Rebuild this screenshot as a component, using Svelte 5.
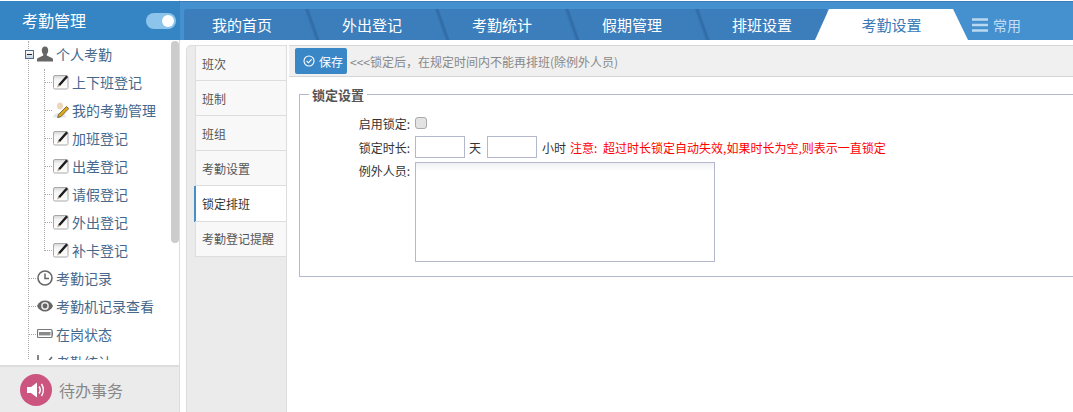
<script>
  const tabs = ['外出登记', '考勤统计', '假期管理', '排班设置'];
  const sideTabs = [
    ['班次', false], ['班制', false], ['班组', false],
    ['考勤设置', false], ['锁定排班', true], ['考勤登记提醒', false]
  ];
  const leaves = [
    ['上下班登记', 'edit'], ['我的考勤管理', 'user'], ['加班登记', 'edit'], ['出差登记', 'edit'],
    ['请假登记', 'edit'], ['外出登记', 'edit'], ['补卡登记', 'edit']
  ];
</script>

{#snippet editIcon()}
  <svg class="ico" width="16" height="16" viewBox="0 0 16 16">
    <defs>
      <linearGradient id="paper" x1="0" y1="0" x2="0" y2="1">
        <stop offset="0" stop-color="#d4d4d4"/>
        <stop offset="0.3" stop-color="#f4f4f4"/>
        <stop offset="1" stop-color="#fff"/>
      </linearGradient>
    </defs>
    <rect x="0.5" y="1.5" width="14.5" height="13.5" rx="1.5" fill="url(#paper)" stroke="#a8a8a8"/>
    <path d="M5.2 10.6 L13.2 1.6 L15 3 L7 12 Z" fill="#1c1c1c"/>
    <path d="M5.2 10.6 L7 12 L4 13.4 Z" fill="#b29a78"/>
  </svg>
{/snippet}

{#snippet userIcon()}
  <svg class="ico" width="16" height="16" viewBox="0 0 16 16">
    <ellipse cx="7" cy="4" rx="3" ry="3.6" fill="#ecd6bc"/>
    <path d="M0 15.5 C0 9.5 13 9 13 15.5 Z" fill="#e4e8ec"/>
    <path d="M5.5 12.5 L13.5 4.5 L15.8 6.6 L8 14.6 L4.6 15.6 Z" fill="#dba820" stroke="#4d4018" stroke-width="0.7"/>
  </svg>
{/snippet}

<div class="app">
  <aside class="side">
    <header class="brand">
      <span>考勤管理</span>
      <span class="toggle"><i></i></span>
    </header>

    <div class="tree">
      <div class="vline outer"></div>
      <div class="vline inner"></div>
      <div class="scroll"></div>

      <div class="row top first">
        <span class="minus"></span>
        <svg class="ico" width="16" height="16" viewBox="0 0 16 16">
          <path d="M8 0.5 C5.6 0.5 4.8 2.4 4.8 4.4 C4.8 6 5.5 7.4 6.2 8.2 L6.2 9.6 L1 12 C0.3 12.4 0 13 0 14 L0 15.5 L16 15.5 L16 14 C16 13 15.7 12.4 15 12 L9.8 9.6 L9.8 8.2 C10.5 7.4 11.2 6 11.2 4.4 C11.2 2.4 10.4 0.5 8 0.5 Z" fill="#666"/>
        </svg>
        <span>个人考勤</span>
      </div>

      {#each leaves as [label, icon]}
        <div class="row leaf">
          {#if icon === 'edit'}{@render editIcon()}{:else}{@render userIcon()}{/if}
          <span>{label}</span>
        </div>
      {/each}

      <div class="row top">
        <svg class="ico" width="16" height="16" viewBox="0 0 16 16">
          <circle cx="8" cy="8" r="7" fill="none" stroke="#666" stroke-width="1.6"/>
          <path d="M8 3.6 V8.6 H12" fill="none" stroke="#666" stroke-width="1.5"/>
        </svg>
        <span>考勤记录</span>
      </div>
      <div class="row top">
        <svg class="ico" width="16" height="16" viewBox="0 0 16 16">
          <path d="M0 8 C3 0.7 13 0.7 16 8 C13 15.3 3 15.3 0 8 Z" fill="#666"/>
          <circle cx="8" cy="8" r="3.9" fill="#e8e8e8"/>
          <circle cx="8" cy="8" r="2.4" fill="#666"/>
        </svg>
        <span>考勤机记录查看</span>
      </div>
      <div class="row top">
        <svg class="ico" width="16" height="16" viewBox="0 0 16 16">
          <rect x="0.5" y="3.5" width="14.5" height="8" rx="1" fill="#fff" stroke="#777" stroke-width="1.2"/>
          <rect x="2" y="6" width="11.5" height="3.4" fill="#8a8a8a"/>
          <rect x="15" y="5.5" width="1" height="4" fill="#777"/>
        </svg>
        <span>在岗状态</span>
      </div>
      <div class="row top">
        <svg class="ico" width="16" height="16" viewBox="0 0 16 16">
          <path d="M1 1 V15 H16" fill="none" stroke="#666" stroke-width="1.6"/>
          <path d="M3 11 L7 7 L10 9 L15 3" fill="none" stroke="#666" stroke-width="1.6"/>
        </svg>
        <span>考勤统计</span>
      </div>
    </div>

    <footer class="todo">
      <span class="speaker">
        <svg width="20" height="20" viewBox="0 0 20 20">
          <path d="M1 7 H5 L11 2.5 V17.5 L5 13 H1 Z" fill="#fff"/>
          <path d="M13 6.5 C14.4 8.5 14.4 11.5 13 13.5" fill="none" stroke="#fff" stroke-width="1.5"/>
          <path d="M15.5 4 C17.8 7.5 17.8 12.5 15.5 16" fill="none" stroke="#fff" stroke-width="1.5"/>
        </svg>
      </span>
      <span>待办事务</span>
    </footer>
  </aside>

  <main class="main">
    <nav class="tabbar">
      <a class="tab home">我的首页</a>
      {#each tabs as t, i}
        <a class="tab" class:last={i === tabs.length - 1}>{t}</a>
      {/each}
      <a class="tab-active">考勤设置</a>
      <a class="common">
        <svg width="16" height="14" viewBox="0 0 16 14">
          <path d="M0 1.5 H16 M0 7 H16 M0 12.5 H16" stroke="#b9d9f1" stroke-width="2.4"/>
        </svg>
        <span>常用</span>
      </a>
    </nav>

    <div class="workspace">
      <ul class="sidetabs">
        {#each sideTabs as [label, active]}
          <li class:active>{label}</li>
        {/each}
      </ul>

      <section class="content">
        <div class="toolbar">
          <button class="save" type="button">
            <svg width="12" height="12" viewBox="0 0 12 12">
              <circle cx="6" cy="6" r="5" fill="none" stroke="#fff" stroke-width="1.1"/>
              <path d="M3.6 6 L5.4 7.8 L8.6 4.4" fill="none" stroke="#fff" stroke-width="1.1"/>
            </svg>
            保存
          </button>
          <span class="hint">&lt;&lt;&lt;锁定后，在规定时间内不能再排班(除例外人员)</span>
        </div>

        <fieldset class="lock">
          <legend>锁定设置</legend>
          <div class="field check">
            <label for="en">启用锁定:</label>
            <input id="en" type="checkbox" />
          </div>
          <div class="field dur">
            <label for="d">锁定时长:</label>
            <input id="d" class="num" type="text" />
            <span class="unit">天</span>
            <input class="num" type="text" aria-label="小时" />
            <span class="unit">小时</span>
            <span class="warn">注意: 超过时长锁定自动失效,如果时长为空,则表示一直锁定</span>
          </div>
          <div class="field area">
            <label for="t">例外人员:</label>
            <textarea id="t"></textarea>
          </div>
        </fieldset>
      </section>
    </div>
  </main>
</div>

<style>
  :global(body) {
    margin: 0;
    background: #fff;
    overflow: hidden;
  }
  .app {
    display: flex;
    height: 412px;
    overflow: hidden;
    font-family: "Noto Sans CJK SC", "Liberation Sans", sans-serif;
    font-size: 12px;
    color: #333;
  }

  /* sidebar */
  .side {
    flex: 0 0 180px;
    min-width: 0;
    box-sizing: border-box;
    display: flex;
    flex-direction: column;
    border-right: 1px solid #ddd;
    padding-top: 1px;
  }
  .brand {
    flex: 0 0 39px;
    margin-right: -1px;
    box-sizing: border-box;
    display: flex;
    align-items: center;
    justify-content: space-between;
    padding: 0 4px 2px 22px;
    background: #3585c5;
    color: #fff;
    font-size: 16px;
  }
  .toggle {
    display: flex;
    justify-content: flex-end;
    align-items: center;
    width: 30px;
    height: 16px;
    margin-top: 2px;
    padding: 0 2px;
    box-sizing: border-box;
    border-radius: 8px;
    background: #8cc4ec;
  }
  .toggle i {
    width: 12px;
    height: 12px;
    border-radius: 50%;
    background: #fff;
  }
  .tree {
    position: relative;
    flex: 1;
    min-height: 0;
    overflow: hidden;
    margin-bottom: 5px;
    font-size: 14px;
    color: #45688c;
  }
  .vline {
    position: absolute;
    border-left: 1px dotted #aaa;
  }
  .vline.outer { left: 28px; top: 1px; height: 340px; }
  .vline.inner { left: 44px; top: 29px; height: 182px; }
  .scroll {
    position: absolute;
    left: 171px;
    top: 1px;
    width: 8px;
    height: 202px;
    border-radius: 4px;
    background: #ccc;
  }
  .row {
    position: relative;
    display: flex;
    align-items: center;
    height: 28px;
    white-space: nowrap;
  }
  .row.top { padding-left: 37px; gap: 3px; }
  .row.leaf { padding-left: 53px; gap: 3px; }
  .row.top::before, .row.leaf::before {
    content: "";
    position: absolute;
    top: 14px;
    border-top: 1px dotted #aaa;
  }
  .row.top::before { left: 29px; width: 7px; }
  .row.leaf::before { left: 45px; width: 7px; }
  .row.first::before { display: none; }
  .ico { flex: none; }
  .minus {
    position: absolute;
    left: 25px;
    top: 10px;
    width: 7px;
    height: 7px;
    border: 1px solid #4e6a8e;
    background: linear-gradient(#fff, #c9d3e0);
    z-index: 1;
  }
  .minus::after {
    content: "";
    position: absolute;
    left: 1px;
    top: 3px;
    width: 5px;
    height: 1px;
    background: #223;
  }
  .todo {
    flex: 0 0 47px;
    box-sizing: border-box;
    border-top: 2px solid #ddd;
    display: flex;
    align-items: center;
    gap: 7px;
    padding-left: 20px;
    background: #ebebeb;
    font-size: 16px;
    color: #888;
  }
  .speaker {
    display: flex;
    align-items: center;
    justify-content: center;
    width: 32px;
    height: 32px;
    border-radius: 50%;
    background: #cc5580;
  }

  /* main */
  .main {
    flex: 1;
    min-width: 0;
    display: flex;
    flex-direction: column;
    padding-top: 1px;
  }
  .tabbar {
    flex: 0 0 39px;
    display: flex;
    align-items: flex-end;
    box-sizing: border-box;
    padding-left: 4px;
    background: #4591d0;
    border-top: 1px solid #3b7cbc;
  }
  .tab {
    position: relative;
    box-sizing: border-box;
    flex: 0 0 130px;
    height: 31px;
    line-height: 31px;
    text-align: center;
    font-size: 15px;
    color: #fff;
    background: #3c7ebc;
  }
  .tab.home {
    flex-basis: 123px;
    padding-right: 7px;
    border-top-left-radius: 3px;
  }
  .tab::after {
    content: "";
    position: absolute;
    top: 0;
    bottom: 0;
    left: calc(100% + 2px);
    width: 6px;
    transform: skewX(19.5deg);
    background: linear-gradient(90deg, #3c7ebc, #2f6aa5 60%, #3c7ebc);
    z-index: 1;
  }
  .tab.last::after { display: none; }
  .tab-active {
    flex: 0 0 153px;
    margin-left: -12px;
    height: 31px;
    line-height: 31px;
    text-align: center;
    font-size: 15px;
    color: #3b7ab5;
    background: #fff;
    clip-path: polygon(0 100%, 14px 0, 138px 0, 100% 100%);
    z-index: 2;
  }
  .common {
    display: flex;
    align-items: center;
    gap: 5px;
    height: 31px;
    margin-left: 4px;
    font-size: 14px;
    color: #c3def3;
  }

  .workspace {
    flex: 1;
    min-height: 0;
    display: flex;
    padding-top: 5px;
    padding-left: 6px;
  }
  .sidetabs {
    flex: 0 0 101px;
    box-sizing: border-box;
    margin: 0;
    padding: 0 0 0 8px;
    list-style: none;
    background: #ebebeb;
    border: 1px solid #ddd;
    border-width: 1px 1px 0 1px;
    border-top-left-radius: 5px;
  }
  .sidetabs li {
    box-sizing: border-box;
    height: 36px;
    margin-top: -1px;
    line-height: 34px;
    padding-left: 6px;
    background: #f8f8f8;
    border: 1px solid #ddd;
    border-right: 0;
    color: #555;
    font-size: 12px;
  }
  .sidetabs li:nth-child(-n+4) { padding-top: 1px; }
  .sidetabs li:first-child { margin-top: 0; height: 35px; border-top: 0; }
  .sidetabs li.active {
    height: 36px;
    margin-top: 0;
    margin-left: -1px;
    padding-left: 6px;
    background: #fff;
    border: 0;
    border-left: 2px solid #4a8fc4;
    line-height: 36px;
    color: #333;
  }

  .content {
    flex: 1;
    min-width: 0;
    margin-left: 2px;
    overflow: hidden;
  }
  .toolbar {
    box-sizing: border-box;
    height: 32px;
    display: flex;
    align-items: center;
    gap: 3px;
    padding-left: 6px;
    background: #f0f0f0;
    border-top: 1px solid #d5d5d5;
    border-bottom: 1px solid #d5d5d5;
  }
  .save {
    display: flex;
    align-items: center;
    gap: 4px;
    width: 52px;
    height: 26px;
    padding: 0 0 0 8px;
    border: 0;
    border-radius: 2px;
    background: #3a87c8;
    color: #fff;
    font: inherit;
    font-size: 12px;
  }
  .hint { color: #888; }

  .lock {
    margin: 9px -30px 0 10px;
    padding: 13px 0 14px 0;
    border: 1px solid #b4b8cc;
    height: 191px;
    box-sizing: border-box;
    min-width: 0;
  }
  legend {
    margin-left: 9px;
    padding: 1px 3px 0 3px;
    font-size: 13px;
    font-weight: 700;
    line-height: 16px;
    color: #555;
  }
  .field {
    display: flex;
    align-items: center;
    color: #333;
    white-space: nowrap;
  }
  .field label {
    flex: 0 0 110px;
    text-align: right;
    margin-right: 5px;
  }
  .field.check { height: 22px; margin-top: -4px; }
  .check input {
    width: 12px;
    height: 12px;
    margin: 0;
    appearance: none;
    border: 1px solid #aaa;
    border-radius: 3px;
    background: #e3e3e3;
  }
  .field.dur { margin-top: 2px; height: 22px; }
  .num {
    box-sizing: border-box;
    width: 50px;
    height: 22px;
    border: 1px solid #b4b8cc;
    padding: 0;
    background: #fff;
  }
  .unit { margin: 0 6px 0 4px; }
  .unit + .num + .unit { margin: 0 4px 0 5px; }
  .warn { color: #f00; word-spacing: 3px; }
  .field.area { align-items: flex-start; margin-top: 4px; }
  textarea {
    box-sizing: border-box;
    width: 300px;
    height: 100px;
    margin: 0;
    padding: 0;
    resize: none;
    border: 1px solid #b4b8cc;
    background: linear-gradient(#eef0f2, #fff 8px);
    display: block;
  }
</style>
